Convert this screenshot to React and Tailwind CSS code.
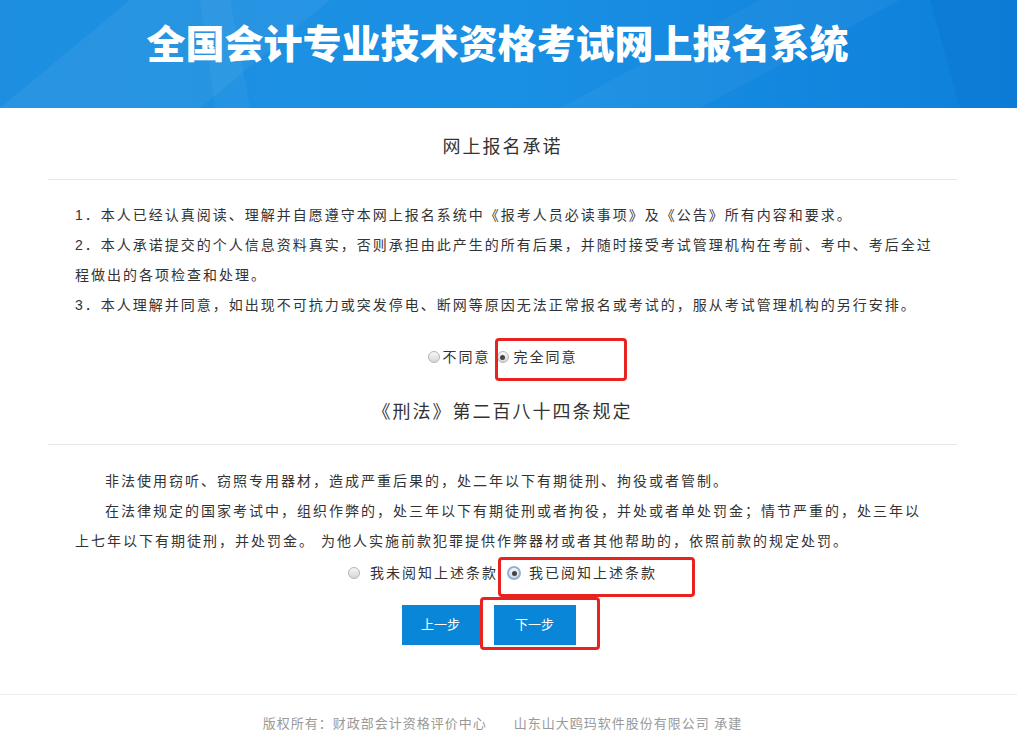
import React, { useState } from 'react';

const FONT = { fontFamily: '"Liberation Sans", "Noto Sans CJK SC", sans-serif' };

const Radio = ({ checked, focus, onClick }) => (
  <span
    onClick={onClick}
    className={
      'inline-flex items-center justify-center rounded-full shrink-0 cursor-pointer ' +
      (focus
        ? 'w-[14px] h-[14px] border-2 border-[#8fb2dc] bg-gradient-to-b from-[#f4f4f4] to-[#d8d8d8]'
        : 'w-[12px] h-[12px] border border-[#b5b5b5] bg-gradient-to-b from-[#f7f7f7] to-[#d6d6d6]')
    }
  >
    {checked && <span className="w-[5px] h-[5px] rounded-full bg-[#444]" />}
  </span>
);

const HeaderBg = () => (
  <svg className="absolute inset-0 w-full h-full" viewBox="0 0 1017 108" preserveAspectRatio="none">
    <defs>
      <linearGradient id="hb" x1="0" y1="0" x2="1" y2="0">
        <stop offset="0" stopColor="#1e8fe0" />
        <stop offset="0.5" stopColor="#1a90e4" />
        <stop offset="1" stopColor="#0d80da" />
      </linearGradient>
    </defs>
    <rect width="1017" height="108" fill="url(#hb)" />
    <polygon points="0,108 130,0 330,0 200,108" fill="#ffffff" opacity="0.05" />
    <polygon points="200,0 230,0 250,108 215,108" fill="#ffffff" opacity="0.04" />
    <polygon points="560,108 760,0 900,0 700,108" fill="#ffffff" opacity="0.04" />
    <polygon points="930,0 1017,0 1017,108 960,108" fill="#0a74cf" opacity="0.35" />
  </svg>
);

const App = () => {
  const [agree, setAgree] = useState(true);
  const [read, setRead] = useState(true);

  return (
    <div className="relative min-h-screen bg-white text-[#333]" style={FONT}>
      <div className="relative h-[108px] overflow-hidden flex justify-center pr-[22px]">
        <HeaderBg />
        <h1
          className="relative mt-[19px] text-[39px] leading-[44px] font-black text-white"
          style={{ fontFamily: '"Noto Sans CJK SC", sans-serif' }}
        >
          全国会计专业技术资格考试网上报名系统
        </h1>
      </div>

      <div className="ml-[48px] mr-[60px]">
        <div className="pt-[27px] pb-[20px] border-b border-[#e8e8e8] text-center text-[18px] leading-[24px] tracking-[2px]">
          网上报名承诺
        </div>
        <div className="pl-[27px] pr-[23px] pt-[20px] text-[14px] leading-[30px] tracking-[2px]">
          <p>1．本人已经认真阅读、理解并自愿遵守本网上报名系统中《报考人员必读事项》及《公告》所有内容和要求。</p>
          <p>2．本人承诺提交的个人信息资料真实，否则承担由此产生的所有后果，并随时接受考试管理机构在考前、考中、考后全过程做出的各项检查和处理。</p>
          <p>3．本人理解并同意，如出现不可抗力或突发停电、断网等原因无法正常报名或考试的，服从考试管理机构的另行安排。</p>
        </div>
        <div className="mt-[22px] h-[30px] flex items-center justify-center text-[14px] tracking-[2px]">
          <label className="flex items-center gap-[3px] cursor-pointer" onClick={() => setAgree(false)}>
            <Radio checked={!agree} />
            <span>不同意</span>
          </label>
          <label className="ml-[6px] flex items-center gap-[5px] cursor-pointer" onClick={() => setAgree(true)}>
            <Radio checked={agree} />
            <span>完全同意</span>
          </label>
        </div>

        <div className="mt-[28px] pb-[20px] border-b border-[#e8e8e8] text-center text-[18px] leading-[24px] tracking-[2px]">
          《刑法》第二百八十四条规定
        </div>
        <div className="pl-[27px] pr-[23px] pt-[21px] text-[14px] leading-[30px] tracking-[2px]">
          <p className="indent-[30px]">非法使用窃听、窃照专用器材，造成严重后果的，处二年以下有期徒刑、拘役或者管制。</p>
          <p className="indent-[30px]">在法律规定的国家考试中，组织作弊的，处三年以下有期徒刑或者拘役，并处或者单处罚金；情节严重的，处三年以上七年以下有期徒刑，并处罚金。 为他人实施前款犯罪提供作弊器材或者其他帮助的，依照前款的规定处罚。</p>
        </div>
        <div className="mt-[2px] h-[30px] flex items-center justify-center text-[14px] tracking-[2px]">
          <label className="flex items-center gap-[10px] cursor-pointer" onClick={() => setRead(false)}>
            <Radio checked={!read} />
            <span>我未阅知上述条款</span>
          </label>
          <label className="ml-[9px] flex items-center gap-[8px] cursor-pointer" onClick={() => setRead(true)}>
            <Radio checked={read} focus />
            <span>我已阅知上述条款</span>
          </label>
        </div>

        <div className="mt-[17px] flex justify-center gap-[14px] pr-[28px]">
          <button className="w-[78px] h-[40px] bg-[#0a86d9] text-white text-[13px]">上一步</button>
          <button className="w-[82px] h-[40px] bg-[#0a86d9] text-white text-[13px]">下一步</button>
        </div>
      </div>

      <div className="mt-[49px] border-t border-[#ececec] pt-[20px] pb-[22px] pr-[12px] flex justify-center gap-[27px] text-[13px] leading-[18px] text-[#999] tracking-[1px]">
        <span>版权所有：财政部会计资格评价中心</span>
        <span>山东山大鸥玛软件股份有限公司 承建</span>
      </div>

      {/* 标注框 */}
      <div className="absolute left-[495px] top-[338px] w-[132px] h-[43px] border-[3px] border-[#e8231f] rounded-[4px] pointer-events-none" />
      <div className="absolute left-[498px] top-[557px] w-[197px] h-[40px] border-[3px] border-[#e8231f] rounded-[4px] pointer-events-none" />
      <div className="absolute left-[480px] top-[597px] w-[120px] h-[53px] border-[3px] border-[#e8231f] rounded-[4px] pointer-events-none" />
    </div>
  );
};

export default App;
